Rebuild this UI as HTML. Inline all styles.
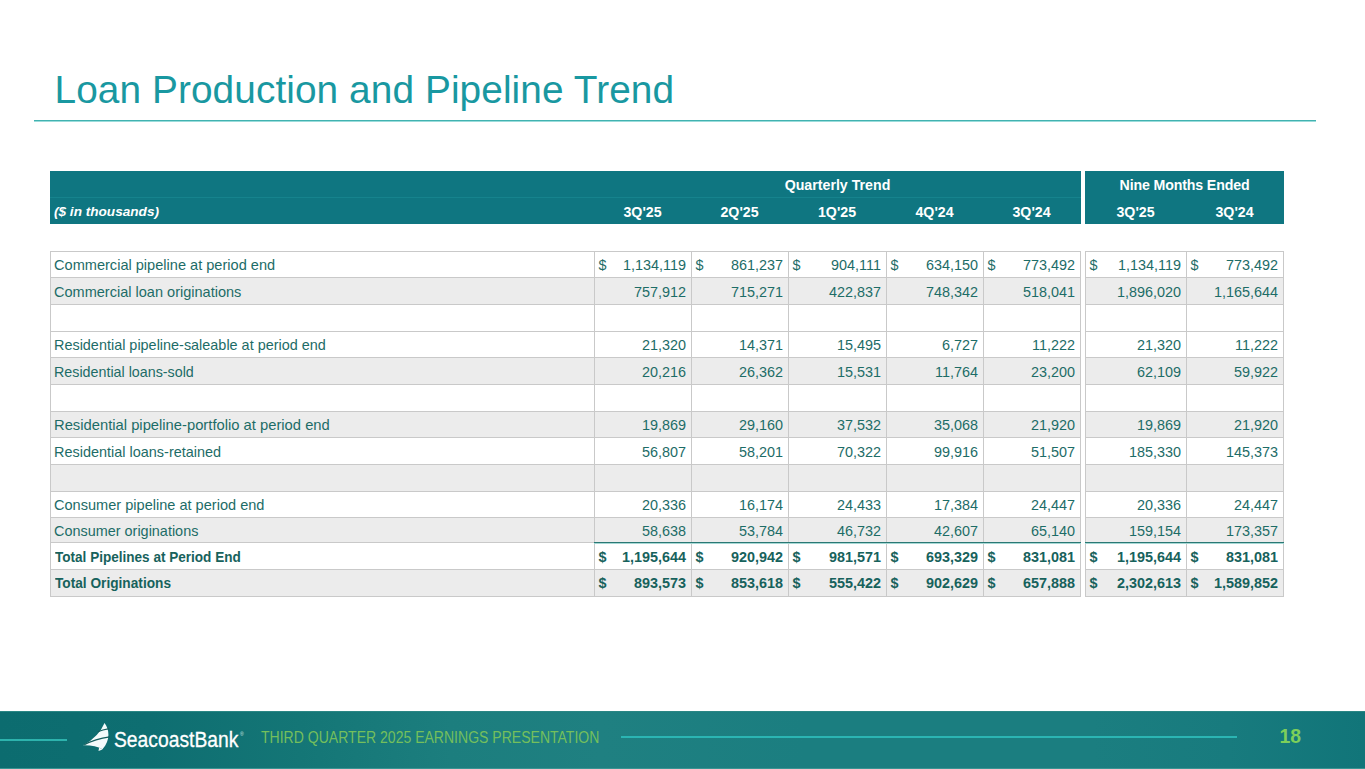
<!DOCTYPE html>
<html><head><meta charset="utf-8">
<style>
*{margin:0;padding:0;box-sizing:border-box}
html,body{width:1365px;height:769px;overflow:hidden;background:#fff;font-family:"Liberation Sans",sans-serif}
div{position:absolute;white-space:nowrap}
#title{left:54.5px;top:67px;font-size:38.8px;color:#1998a1;line-height:46px;letter-spacing:0.08px}
#rule{left:34px;top:120px;width:1282px;height:1px;background:#41b2b0}
#rule2{left:34px;top:121px;width:1282px;height:1px;background:#9adcdb}
.hdr{background:#0f7681}
.hsep{height:1px;background:#16838d}
.ht{color:#fff;font-weight:bold;font-size:14.2px;line-height:26px;text-align:center}
.bg{background:#fff}
.alt{background:#ececec}
.hl{height:1px;background:#c9c9c9}
.vl{width:1px;background:#c9c9c9}
.t{color:#1d6c67;font-size:14.4px;line-height:26px}
.b{font-weight:bold;color:#17625c}
.r{text-align:right}
</style></head><body>
<div id="title">Loan Production and Pipeline Trend</div>
<div id="rule"></div><div id="rule2"></div>

<div class="hdr" style="left:50px;top:171px;width:1031px;height:53px"></div>
<div class="hdr" style="left:1085px;top:171px;width:199px;height:53px"></div>
<div class="hsep" style="left:50px;top:197px;width:1031px"></div>
<div class="ht" style="left:594.5px;top:172px;width:486px">Quarterly Trend</div>
<div class="ht" style="left:1085px;top:172px;width:199px;letter-spacing:-0.15px">Nine Months Ended</div>
<div class="ht" style="left:54px;top:199px;text-align:left;font-style:italic;font-size:13.6px">($ in thousands)</div>
<div class="ht" style="left:594px;top:199px;width:97px">3Q'25</div>
<div class="ht" style="left:691px;top:199px;width:97px">2Q'25</div>
<div class="ht" style="left:788px;top:199px;width:98px">1Q'25</div>
<div class="ht" style="left:886px;top:199px;width:97px">4Q'24</div>
<div class="ht" style="left:983px;top:199px;width:97px">3Q'24</div>
<div class="ht" style="left:1085px;top:199px;width:101px">3Q'25</div>
<div class="ht" style="left:1186px;top:199px;width:97px">3Q'24</div>
<div class="bg" style="left:50px;top:251px;width:1031px;height:26px"></div>
<div class="bg" style="left:1085px;top:251px;width:199px;height:26px"></div>
<div class="t" style="left:54px;top:251.70px;transform:scaleX(1.0125);transform-origin:0 0">Commercial pipeline at period end</div>
<div class="t" style="left:598.5px;top:251.70px">$</div>
<div class="t r" style="left:594px;width:92px;top:251.70px">1,134,119</div>
<div class="t" style="left:695.5px;top:251.70px">$</div>
<div class="t r" style="left:691px;width:92px;top:251.70px">861,237</div>
<div class="t" style="left:792.5px;top:251.70px">$</div>
<div class="t r" style="left:788px;width:93px;top:251.70px">904,111</div>
<div class="t" style="left:890.5px;top:251.70px">$</div>
<div class="t r" style="left:886px;width:92px;top:251.70px">634,150</div>
<div class="t" style="left:987.5px;top:251.70px">$</div>
<div class="t r" style="left:983px;width:92px;top:251.70px">773,492</div>
<div class="t" style="left:1089.5px;top:251.70px">$</div>
<div class="t r" style="left:1085px;width:96px;top:251.70px">1,134,119</div>
<div class="t" style="left:1190.5px;top:251.70px">$</div>
<div class="t r" style="left:1186px;width:92px;top:251.70px">773,492</div>
<div class="alt" style="left:50px;top:277px;width:1031px;height:27px"></div>
<div class="alt" style="left:1085px;top:277px;width:199px;height:27px"></div>
<div class="t" style="left:54px;top:278.70px;transform:scaleX(1.0098);transform-origin:0 0">Commercial loan originations</div>
<div class="t r" style="left:594px;width:92px;top:278.70px">757,912</div>
<div class="t r" style="left:691px;width:92px;top:278.70px">715,271</div>
<div class="t r" style="left:788px;width:93px;top:278.70px">422,837</div>
<div class="t r" style="left:886px;width:92px;top:278.70px">748,342</div>
<div class="t r" style="left:983px;width:92px;top:278.70px">518,041</div>
<div class="t r" style="left:1085px;width:96px;top:278.70px">1,896,020</div>
<div class="t r" style="left:1186px;width:92px;top:278.70px">1,165,644</div>
<div class="bg" style="left:50px;top:304px;width:1031px;height:27px"></div>
<div class="bg" style="left:1085px;top:304px;width:199px;height:27px"></div>
<div class="bg" style="left:50px;top:331px;width:1031px;height:26px"></div>
<div class="bg" style="left:1085px;top:331px;width:199px;height:26px"></div>
<div class="t" style="left:54px;top:331.70px;transform:scaleX(1.0022);transform-origin:0 0">Residential pipeline-saleable at period end</div>
<div class="t r" style="left:594px;width:92px;top:331.70px">21,320</div>
<div class="t r" style="left:691px;width:92px;top:331.70px">14,371</div>
<div class="t r" style="left:788px;width:93px;top:331.70px">15,495</div>
<div class="t r" style="left:886px;width:92px;top:331.70px">6,727</div>
<div class="t r" style="left:983px;width:92px;top:331.70px">11,222</div>
<div class="t r" style="left:1085px;width:96px;top:331.70px">21,320</div>
<div class="t r" style="left:1186px;width:92px;top:331.70px">11,222</div>
<div class="alt" style="left:50px;top:357px;width:1031px;height:27px"></div>
<div class="alt" style="left:1085px;top:357px;width:199px;height:27px"></div>
<div class="t" style="left:54px;top:358.70px;transform:scaleX(0.9928);transform-origin:0 0">Residential loans-sold</div>
<div class="t r" style="left:594px;width:92px;top:358.70px">20,216</div>
<div class="t r" style="left:691px;width:92px;top:358.70px">26,362</div>
<div class="t r" style="left:788px;width:93px;top:358.70px">15,531</div>
<div class="t r" style="left:886px;width:92px;top:358.70px">11,764</div>
<div class="t r" style="left:983px;width:92px;top:358.70px">23,200</div>
<div class="t r" style="left:1085px;width:96px;top:358.70px">62,109</div>
<div class="t r" style="left:1186px;width:92px;top:358.70px">59,922</div>
<div class="bg" style="left:50px;top:384px;width:1031px;height:27px"></div>
<div class="bg" style="left:1085px;top:384px;width:199px;height:27px"></div>
<div class="alt" style="left:50px;top:411px;width:1031px;height:26px"></div>
<div class="alt" style="left:1085px;top:411px;width:199px;height:26px"></div>
<div class="t" style="left:54px;top:411.70px;transform:scaleX(1.0259);transform-origin:0 0">Residential pipeline-portfolio at period end</div>
<div class="t r" style="left:594px;width:92px;top:411.70px">19,869</div>
<div class="t r" style="left:691px;width:92px;top:411.70px">29,160</div>
<div class="t r" style="left:788px;width:93px;top:411.70px">37,532</div>
<div class="t r" style="left:886px;width:92px;top:411.70px">35,068</div>
<div class="t r" style="left:983px;width:92px;top:411.70px">21,920</div>
<div class="t r" style="left:1085px;width:96px;top:411.70px">19,869</div>
<div class="t r" style="left:1186px;width:92px;top:411.70px">21,920</div>
<div class="bg" style="left:50px;top:437px;width:1031px;height:27px"></div>
<div class="bg" style="left:1085px;top:437px;width:199px;height:27px"></div>
<div class="t" style="left:54px;top:438.70px;transform:scaleX(1.0043);transform-origin:0 0">Residential loans-retained</div>
<div class="t r" style="left:594px;width:92px;top:438.70px">56,807</div>
<div class="t r" style="left:691px;width:92px;top:438.70px">58,201</div>
<div class="t r" style="left:788px;width:93px;top:438.70px">70,322</div>
<div class="t r" style="left:886px;width:92px;top:438.70px">99,916</div>
<div class="t r" style="left:983px;width:92px;top:438.70px">51,507</div>
<div class="t r" style="left:1085px;width:96px;top:438.70px">185,330</div>
<div class="t r" style="left:1186px;width:92px;top:438.70px">145,373</div>
<div class="alt" style="left:50px;top:464px;width:1031px;height:27px"></div>
<div class="alt" style="left:1085px;top:464px;width:199px;height:27px"></div>
<div class="bg" style="left:50px;top:491px;width:1031px;height:26px"></div>
<div class="bg" style="left:1085px;top:491px;width:199px;height:26px"></div>
<div class="t" style="left:54px;top:491.70px;transform:scaleX(1.0117);transform-origin:0 0">Consumer pipeline at period end</div>
<div class="t r" style="left:594px;width:92px;top:491.70px">20,336</div>
<div class="t r" style="left:691px;width:92px;top:491.70px">16,174</div>
<div class="t r" style="left:788px;width:93px;top:491.70px">24,433</div>
<div class="t r" style="left:886px;width:92px;top:491.70px">17,384</div>
<div class="t r" style="left:983px;width:92px;top:491.70px">24,447</div>
<div class="t r" style="left:1085px;width:96px;top:491.70px">20,336</div>
<div class="t r" style="left:1186px;width:92px;top:491.70px">24,447</div>
<div class="alt" style="left:50px;top:517px;width:1031px;height:25px"></div>
<div class="alt" style="left:1085px;top:517px;width:199px;height:25px"></div>
<div class="t" style="left:54px;top:518.20px;transform:scaleX(1.0028);transform-origin:0 0">Consumer originations</div>
<div class="t r" style="left:594px;width:92px;top:518.20px">58,638</div>
<div class="t r" style="left:691px;width:92px;top:518.20px">53,784</div>
<div class="t r" style="left:788px;width:93px;top:518.20px">46,732</div>
<div class="t r" style="left:886px;width:92px;top:518.20px">42,607</div>
<div class="t r" style="left:983px;width:92px;top:518.20px">65,140</div>
<div class="t r" style="left:1085px;width:96px;top:518.20px">159,154</div>
<div class="t r" style="left:1186px;width:92px;top:518.20px">173,357</div>
<div class="bg" style="left:50px;top:542px;width:1031px;height:27px"></div>
<div class="bg" style="left:1085px;top:542px;width:199px;height:27px"></div>
<div class="t b" style="left:55px;top:543.70px;transform:scaleX(0.9418);transform-origin:0 0">Total Pipelines at Period End</div>
<div class="t b" style="left:598.5px;top:543.70px">$</div>
<div class="t b r" style="left:594px;width:92px;top:543.70px">1,195,644</div>
<div class="t b" style="left:695.5px;top:543.70px">$</div>
<div class="t b r" style="left:691px;width:92px;top:543.70px">920,942</div>
<div class="t b" style="left:792.5px;top:543.70px">$</div>
<div class="t b r" style="left:788px;width:93px;top:543.70px">981,571</div>
<div class="t b" style="left:890.5px;top:543.70px">$</div>
<div class="t b r" style="left:886px;width:92px;top:543.70px">693,329</div>
<div class="t b" style="left:987.5px;top:543.70px">$</div>
<div class="t b r" style="left:983px;width:92px;top:543.70px">831,081</div>
<div class="t b" style="left:1089.5px;top:543.70px">$</div>
<div class="t b r" style="left:1085px;width:96px;top:543.70px">1,195,644</div>
<div class="t b" style="left:1190.5px;top:543.70px">$</div>
<div class="t b r" style="left:1186px;width:92px;top:543.70px">831,081</div>
<div class="alt" style="left:50px;top:569px;width:1031px;height:27px"></div>
<div class="alt" style="left:1085px;top:569px;width:199px;height:27px"></div>
<div class="t b" style="left:55px;top:570.20px;transform:scaleX(0.9504);transform-origin:0 0">Total Originations</div>
<div class="t b" style="left:598.5px;top:570.20px">$</div>
<div class="t b r" style="left:594px;width:92px;top:570.20px">893,573</div>
<div class="t b" style="left:695.5px;top:570.20px">$</div>
<div class="t b r" style="left:691px;width:92px;top:570.20px">853,618</div>
<div class="t b" style="left:792.5px;top:570.20px">$</div>
<div class="t b r" style="left:788px;width:93px;top:570.20px">555,422</div>
<div class="t b" style="left:890.5px;top:570.20px">$</div>
<div class="t b r" style="left:886px;width:92px;top:570.20px">902,629</div>
<div class="t b" style="left:987.5px;top:570.20px">$</div>
<div class="t b r" style="left:983px;width:92px;top:570.20px">657,888</div>
<div class="t b" style="left:1089.5px;top:570.20px">$</div>
<div class="t b r" style="left:1085px;width:96px;top:570.20px">2,302,613</div>
<div class="t b" style="left:1190.5px;top:570.20px">$</div>
<div class="t b r" style="left:1186px;width:92px;top:570.20px">1,589,852</div>
<div class="hl" style="left:50px;top:251px;width:1031px"></div>
<div class="hl" style="left:1085px;top:251px;width:199px"></div>
<div class="hl" style="left:50px;top:277px;width:1031px"></div>
<div class="hl" style="left:1085px;top:277px;width:199px"></div>
<div class="hl" style="left:50px;top:304px;width:1031px"></div>
<div class="hl" style="left:1085px;top:304px;width:199px"></div>
<div class="hl" style="left:50px;top:331px;width:1031px"></div>
<div class="hl" style="left:1085px;top:331px;width:199px"></div>
<div class="hl" style="left:50px;top:357px;width:1031px"></div>
<div class="hl" style="left:1085px;top:357px;width:199px"></div>
<div class="hl" style="left:50px;top:384px;width:1031px"></div>
<div class="hl" style="left:1085px;top:384px;width:199px"></div>
<div class="hl" style="left:50px;top:411px;width:1031px"></div>
<div class="hl" style="left:1085px;top:411px;width:199px"></div>
<div class="hl" style="left:50px;top:437px;width:1031px"></div>
<div class="hl" style="left:1085px;top:437px;width:199px"></div>
<div class="hl" style="left:50px;top:464px;width:1031px"></div>
<div class="hl" style="left:1085px;top:464px;width:199px"></div>
<div class="hl" style="left:50px;top:491px;width:1031px"></div>
<div class="hl" style="left:1085px;top:491px;width:199px"></div>
<div class="hl" style="left:50px;top:517px;width:1031px"></div>
<div class="hl" style="left:1085px;top:517px;width:199px"></div>
<div class="hl" style="left:50px;top:542px;width:1031px"></div>
<div class="hl" style="left:1085px;top:542px;width:199px"></div>
<div class="hl" style="left:50px;top:569px;width:1031px"></div>
<div class="hl" style="left:1085px;top:569px;width:199px"></div>
<div class="hl" style="left:50px;top:596px;width:1031px"></div>
<div class="hl" style="left:1085px;top:596px;width:199px"></div>
<div class="vl" style="left:50px;top:251px;height:346px"></div>
<div class="vl" style="left:594px;top:251px;height:346px"></div>
<div class="vl" style="left:691px;top:251px;height:346px"></div>
<div class="vl" style="left:788px;top:251px;height:346px"></div>
<div class="vl" style="left:886px;top:251px;height:346px"></div>
<div class="vl" style="left:983px;top:251px;height:346px"></div>
<div class="vl" style="left:1080px;top:251px;height:346px"></div>
<div class="vl" style="left:1085px;top:251px;height:346px"></div>
<div class="vl" style="left:1186px;top:251px;height:346px"></div>
<div class="vl" style="left:1283px;top:251px;height:346px"></div>
<div style="left:594px;top:542px;width:487px;height:1px;background:#2a7874"></div>
<div style="left:594px;top:543px;width:487px;height:1px;background:#a6d8d5"></div>
<div style="left:1085px;top:542px;width:199px;height:1px;background:#2a7874"></div>
<div style="left:1085px;top:543px;width:199px;height:1px;background:#a6d8d5"></div>
<div id="footer" style="left:0;top:711px;width:1365px;height:58px;background:linear-gradient(90deg,#0c6c6f 0%,#0e6e71 11%,#147676 22%,#1c7e7e 33%,#1f8081 44%,#1b7e80 59%,#1b7e80 80%,#187b7e 90%,#117579 100%)"></div>
<div style="left:0;top:711px;width:1365px;height:1px;background:#2a8684"></div>
<div style="left:0;top:768px;width:1365px;height:1px;background:#3a9392"></div>
<div style="left:0;top:739px;width:67px;height:2px;background:#2db3ad"></div>
<div style="left:621px;top:736px;width:616px;height:2px;background:#2bb5b3"></div>
<svg style="position:absolute;left:78px;top:718px" width="40" height="40" viewBox="0 0 769 769">
<path d="M510,95 C600,210 635,420 470,600 Q330,520 100,525 Q400,360 510,95 Z" fill="#f4fbfb"/>
<path d="M405,570 Q450,585 470,605 L395,635 Z" fill="#f4fbfb"/>
<path d="M380,265 Q470,228 600,205" stroke="#145c5c" stroke-width="24" fill="none"/>
<path d="M120,515 Q330,400 610,362" stroke="#145c5c" stroke-width="24" fill="none"/>
</svg>
<div style="left:114px;top:725px;font-size:21.8px;color:#fff;line-height:30px;-webkit-text-stroke:0.3px #fff;transform:scaleX(0.885);transform-origin:0 0">SeacoastBank</div>
<div style="left:240px;top:731px;font-size:5px;color:#cfe6e6;line-height:6px">&#174;</div>
<div style="left:261px;top:726.5px;font-size:16px;color:#74bf5c;line-height:22px;transform:scaleX(0.877);transform-origin:0 0">THIRD QUARTER 2025 EARNINGS PRESENTATION</div>
<div style="left:1279.5px;top:723.8px;font-size:19.4px;color:#7dcf5a;font-weight:bold;line-height:24px">18</div>

</body></html>
